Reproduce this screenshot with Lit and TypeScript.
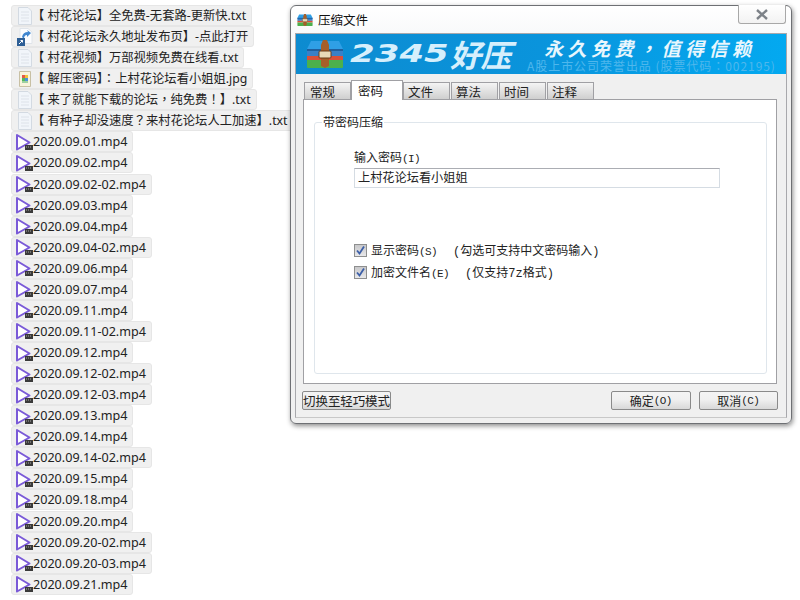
import { LitElement, html, css, svg } from "lit";
import { customElement } from "lit/decorators.js";

const packageIcon = (w: number, h: number) => html`<svg width=${w} height=${h} viewBox="0 0 38 28">
  <path d="M5 1H33L37 9H1Z" fill="#2f9fe6"/>
  <path d="M1 9H37V16H1Z" fill="#3a80c8"/>
  <path d="M1 9H37V11H1Z" fill="#1f5f9f"/>
  <path d="M1 16H37V20H1Z" fill="#d9503a"/>
  <path d="M1 20H37V27Q37 28 36 28H2Q1 28 1 27Z" fill="#4cb04c"/>
  <path d="M15 5L17 0H21L23 5V26L19 28L15 26Z" fill="#a65f2a"/>
  <rect x="13" y="11" width="12" height="7" rx="1" fill="#e9d9b8" stroke="#6b3b18"/>
</svg>`;

const fileIcon = html`<svg class="ic" width="16" height="18" viewBox="0 0 16 18">
  <path d="M1.5 .5H11L14.5 4V17.5H1.5Z" fill="#f1f5fa" stroke="#d3dae2"/>
  <path d="M4 5H12M4 8H12M4 11H12M4 14H12" stroke="#dde2e9"/>
</svg>`;

const linkIcon = html`<svg class="ic" width="16" height="18" viewBox="0 0 16 18">
  <path d="M3 .5H11L15 4V15.5H3Z" fill="#fbfcfe" stroke="#dfe4ea"/>
  <path d="M5 9Q6 4 11 4L10 2L14 5L10 9V7Q7 7 7 11Z" fill="#3f86d0"/>
  <rect x="0" y="10" width="8" height="8" fill="#2e5f96"/>
  <path d="M2 16L5.5 12.5M3.5 12.5H5.5V14.5" stroke="#fff" fill="none"/>
</svg>`;

const imageIcon = html`<svg class="ic" width="16" height="18" viewBox="0 0 16 18">
  <path d="M2.5 1.5H13.5V16.5H2.5Z" fill="#f8f4dc" stroke="#c8c0a4"/>
  <rect x="5" y="5" width="3" height="3" fill="#e45a48"/>
  <rect x="8" y="5" width="3" height="3" fill="#f0c43a"/>
  <rect x="5" y="8" width="3" height="3" fill="#53b85a"/>
  <rect x="8" y="8" width="3" height="3" fill="#4d8fdc"/>
  <rect x="5" y="11" width="6" height="2" fill="#9ed0a0"/>
</svg>`;

const playIcon = html`<svg class="ic play" width="18" height="18" viewBox="0 0 18 18">
  <path d="M2 2L14.5 9.5L2 16.5Z" fill="#fff" stroke="#7a5ad8" stroke-width="2" stroke-linejoin="round"/>
  <rect x="10" y="12" width="8" height="5" fill="#3a3a3a"/>
  <path d="M11 14H17" stroke="#aaa" stroke-dasharray="1 1"/>
</svg>`;

/* Full-width punctuation sits centred in the reference's font, as it does in the TC cut. */
const punct = (text: string) =>
  text.split(/([：，！？])/).map((part, i) => (i % 2 ? html`<span class="p">${part}</span>` : part));

const special = [
  [fileIcon, "【 村花论坛】全免费-无套路-更新快.txt"],
  [linkIcon, "【 村花论坛永久地址发布页】-点此打开"],
  [fileIcon, "【 村花视频】万部视频免费在线看.txt"],
  [imageIcon, "【 解压密码】：上村花论坛看小姐姐.jpg"],
  [fileIcon, "【 来了就能下载的论坛，纯免费！】.txt"],
  [fileIcon, "【 有种子却没速度？来村花论坛人工加速】.txt"],
] as const;

const videos = [
  "01", "02", "02-02", "03", "04", "04-02", "06", "07", "11", "11-02", "12", "12-02",
  "12-03", "13", "14", "14-02", "15", "18", "20", "20-02", "20-03", "21",
].map((d) => `2020.09.${d}.mp4`);

const tabs = ["常规", "密码", "文件", "算法", "时间", "注释"];

@customElement("app-root")
export class AppRoot extends LitElement {
  static styles = css`
    :host {
      display: block;
      position: relative;
      width: 800px;
      height: 600px;
      overflow: hidden;
      background: #fff;
      font-family: "Noto Sans", "Noto Sans CJK SC", sans-serif;
    }
    .p { font-family: "Noto Sans CJK TC", sans-serif; }
    .list {
      display: grid;
      grid-auto-rows: 21.07px;
      justify-items: start;
      padding: 5px 0 0 11px;
    }
    .item {
      display: flex;
      align-items: center;
      height: 19px;
      padding: 0 5px 0 4px;
      background: #f0f0f0;
      border: 1px solid #e6e6e6;
      border-radius: 3px;
      font-size: 12.6px;
      line-height: 19px;
      color: #222;
      white-space: nowrap;
    }
    .item.cn { padding-left: 5px; font-size: 12.3px; }
    .item.cn .ic { margin-right: -1px; }
    .ic { flex: none; }
    .play { margin-left: -1px; }

    .win {
      position: absolute;
      left: 290px;
      top: 5px;
      width: 502px;
      height: 419px;
      box-sizing: border-box;
      padding: 0 4px 5px 4px;
      display: flex;
      flex-direction: column;
      background: linear-gradient(#fff 0, #f8f9fa 30px, #f0f0f0 70px);
      border: 1px solid #6e7074;
      border-radius: 6px;
      box-shadow: 1px 2px 5px rgba(0, 0, 0, 0.45);
      font-family: "Liberation Mono", "Noto Sans CJK SC", monospace;
      font-size: 12px;
      color: #222;
    }
    .title {
      height: 27px;
      flex: none;
      display: flex;
      align-items: center;
      gap: 5px;
      padding-left: 2px;
      font-family: "Noto Sans CJK SC", sans-serif;
      font-size: 12.5px;
      color: #111;
    }
    .close {
      position: absolute;
      top: -1px;
      right: 5px;
      width: 48px;
      height: 19px;
      box-sizing: border-box;
      background: linear-gradient(#fff, #f2f2f2);
      border: 1px solid #a8a8a8;
      border-top: 0;
      border-radius: 0 0 3px 3px;
      display: flex;
      align-items: center;
      justify-content: center;
    }
    .content {
      flex: 1;
      display: flex;
      flex-direction: column;
      background: #f0f0f0;
      border: 1px solid #a8a8ac;
      border-bottom-color: #c8c8c8;
      padding: 0 0 7px;
      min-height: 0;
    }
    .banner {
      height: 40px;
      flex: none;
      display: flex;
      align-items: center;
      background: linear-gradient(90deg, #0d8bd0, #0a94dc 50%, #03a9f0);
      padding-left: 10px;
    }
    .brand {
      margin-left: 6px;
      width: 177px;
      flex: none;
      display: flex;
      align-items: center;
      font-family: "DejaVu Sans", "Noto Sans CJK SC", sans-serif;
      font-weight: 700;
      font-style: italic;
      line-height: 34px;
      color: #d6effc;
      white-space: nowrap;
    }
    .digits {
      display: inline-block;
      width: 100px;
      font-size: 25px;
      transform: scaleX(1.42);
      transform-origin: left center;
    }
    .han {
      font-family: "Noto Sans CJK SC", sans-serif;
      font-size: 31px;
      letter-spacing: -0.5px;
    }
    .slogan {
      display: flex;
      flex-direction: column;
      font-family: "Noto Sans CJK SC", sans-serif;
      font-style: italic;
      white-space: nowrap;
    }
    .s1 {
      margin-left: 17px;
      font-size: 19px;
      font-weight: 700;
      letter-spacing: 4.5px;
      line-height: 22px;
      height: 22px;
      color: #e8f6fd;
    }
    .s2 {
      font-size: 12px;
      font-style: normal;
      line-height: 13px;
      height: 13px;
      letter-spacing: 0.95px;
      color: #4fb7ec;
    }
    .tabs {
      display: flex;
      align-items: flex-end;
      height: 25px;
      flex: none;
      margin-left: 8px;
      position: relative;
    }
    .tab {
      width: 47px;
      height: 17px;
      box-sizing: border-box;
      margin-right: 1px;
      padding-left: 4px;
      display: flex;
      align-items: center;
      background: linear-gradient(#f4f4f4, #cfcfcf);
      border: 1px solid #a0a0a4;
      border-bottom: 0;
      font-size: 12.5px;
      font-family: "Noto Sans CJK SC", sans-serif;
    }
    .tab.first { padding-left: 5px; }
    .tab.on {
      position: relative;
      z-index: 1;
      width: 52px;
      height: 20px;
      margin: 0 0 -1px -1px;
      padding-left: 6px;
      background: #fff;
    }
    .panel {
      flex: none;
      height: 285px;
      box-sizing: border-box;
      margin: 0 9px 0 7px;
      padding: 22px 9px 9px 10px;
      background: #fff;
      border: 1px solid #a0a0a4;
    }
    .group {
      position: relative;
      height: 100%;
      box-sizing: border-box;
      border: 1px solid #dfe6ec;
      border-radius: 3px;
      padding: 27px 46px 0 39px;
    }
    .legend {
      position: absolute;
      left: 7px;
      top: -8px;
      padding: 0 1px;
      background: #fff;
      line-height: 14px;
      font-size: 12px;
      font-family: "Noto Sans CJK SC", sans-serif;
    }
    .label {
      line-height: 18px;
      height: 18px;
    }
    .key { font-size: 11px; letter-spacing: -0.6px; }
    .input {
      height: 20px;
      box-sizing: border-box;
      border: 1px solid #d5dce3;
      border-top-color: #abadb3;
      padding-left: 3px;
      line-height: 17px;
      background: #fff;
      font-size: 12.2px;
      font-family: "Noto Sans CJK SC", sans-serif;
    }
    .checks {
      margin-top: 51px;
      display: grid;
      grid-auto-rows: 22px;
    }
    .check {
      display: flex;
      align-items: center;
      gap: 4px;
      white-space: nowrap;
    }
    .box {
      width: 13px;
      height: 13px;
      flex: none;
      box-sizing: border-box;
      border: 1px solid #8e8f8f;
      background: linear-gradient(#c8c8ca, #e8e8ea);
      display: flex;
    }
    .hint { margin-left: 12px; }
    .footer {
      flex: 1;
      display: flex;
      align-items: flex-end;
      padding: 0 8px 0 6px;
      gap: 8px;
    }
    .btn {
      height: 19px;
      box-sizing: border-box;
      display: flex;
      align-items: center;
      justify-content: center;
      background: linear-gradient(#f4f4f4, #f0f0f0 45%, #d8d8d8);
      border: 1px solid #8a8a8a;
      border-radius: 2px;
      white-space: nowrap;
    }
    .switch { width: 89px; margin-right: auto; font-size: 12.5px; letter-spacing: -0.1px; font-family: "Noto Sans CJK SC", sans-serif; }
    .act { width: 79.5px; }
  `;

  render() {
    return html`
      <div class="list">
        ${special.map(([icon, name]) => html`<div class="item cn">${icon}<span>${punct(name)}</span></div>`)}
        ${videos.map((name) => html`<div class="item">${playIcon}<span>${name}</span></div>`)}
      </div>
      <div class="win">
        <div class="title">${packageIcon(16, 14)}<span>压缩文件</span></div>
        <div class="close">
          <svg width="14" height="11" viewBox="0 0 14 11">
            <path d="M2 1L12 10M12 1L2 10" stroke="#7d8288" stroke-width="2.4" fill="none"/>
          </svg>
        </div>
        <div class="content">
          <div class="banner">
            ${packageIcon(38, 28)}
            <div class="brand"><span class="digits">2345</span><span class="han">好压</span></div>
            <div class="slogan">
              <span class="s1">${punct("永久免费，值得信赖")}</span>
              <span class="s2">A股上市公司荣誉出品 (股票代码${punct("：")}002195)</span>
            </div>
          </div>
          <div class="tabs">
            ${tabs.map((t, i) => html`<div class="tab ${i === 1 ? "on" : ""} ${i === 0 ? "first" : ""}">${t}</div>`)}
          </div>
          <div class="panel">
            <div class="group">
              <div class="legend">带密码压缩</div>
              <div class="label">输入密码<span class="key">(I)</span></div>
              <div class="input">上村花论坛看小姐姐</div>
              <div class="checks">
                <div class="check">
                  ${this.box()}<span>显示密码<span class="key">(S)</span></span><span class="hint">(勾选可支持中文密码输入)</span>
                </div>
                <div class="check">
                  ${this.box()}<span>加密文件名<span class="key">(E)</span></span><span class="hint">(仅支持7z格式)</span>
                </div>
              </div>
            </div>
          </div>
          <div class="footer">
            <div class="btn switch">切换至轻巧模式</div>
            <div class="btn act">确定<span class="key">(O)</span></div>
            <div class="btn act">取消<span class="key">(C)</span></div>
          </div>
        </div>
      </div>
    `;
  }

  box() {
    return html`<span class="box"><svg width="11" height="11" viewBox="0 0 11 11">
      ${svg`<path d="M2 5.5L4.5 8.5L9 1.5" stroke="#3c5fa8" stroke-width="1.8" fill="none"/>`}
    </svg></span>`;
  }
}
